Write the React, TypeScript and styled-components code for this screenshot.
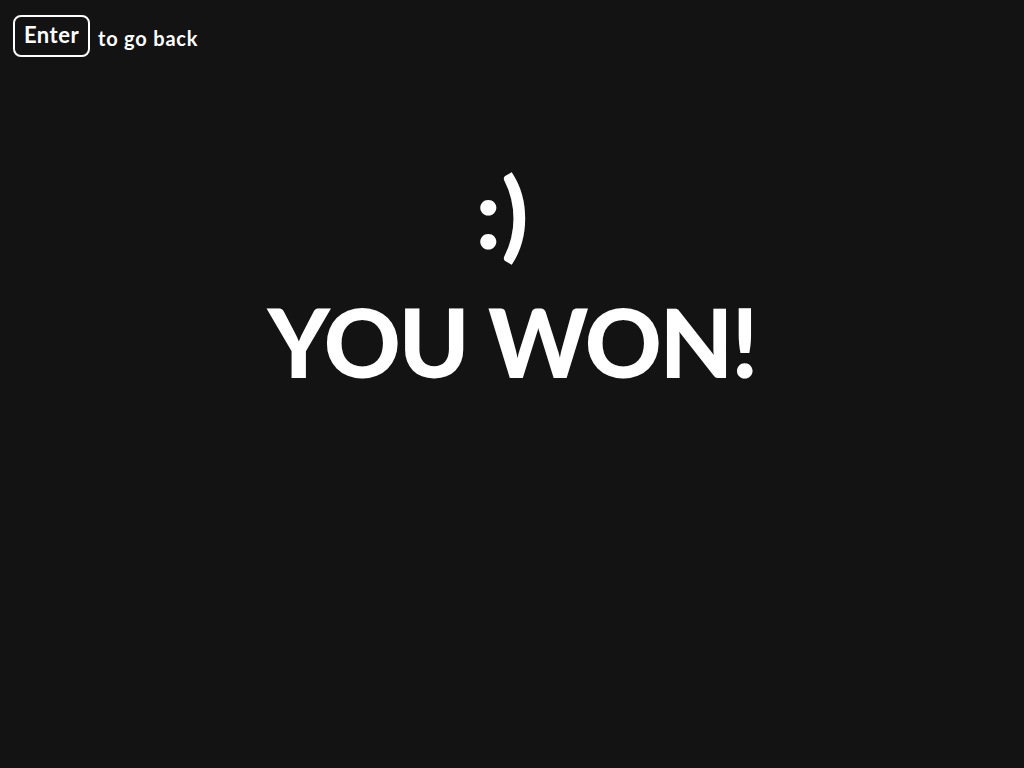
import React from "react";
import styled, { createGlobalStyle } from "styled-components";

const Global = createGlobalStyle`
  html, body { margin: 0; padding: 0; background: #131313; }
  body { font-family: Lato, "Liberation Sans", sans-serif; color: #fff; }
`;

const Page = styled.div`
  width: 1024px;
  height: 768px;
  background: #131313;
  display: flex;
  flex-direction: column;
`;

const Hint = styled.div`
  display: flex;
  align-items: center;
  gap: 8px;
  padding: 15px 0 0 13px;
`;

const Key = styled.span`
  display: inline-flex;
  align-items: center;
  justify-content: center;
  box-sizing: border-box;
  width: 77px;
  height: 42px;
  border: 2px solid #fff;
  border-radius: 8px;
  font-size: 22px;
  font-weight: 700;
  letter-spacing: 0.5px;
  padding-bottom: 3px;
`;

const HintText = styled.span`
  font-size: 20px;
  font-weight: 700;
  letter-spacing: 0.8px;
  padding-top: 3px;
`;

const Center = styled.div`
  display: flex;
  flex-direction: column;
  align-items: center;
  margin-top: 105px;
`;

const Smiley = styled.div`
  font-size: 98px;
  font-weight: 900;
  line-height: 1;
  margin-right: 20px;
`;

const Title = styled.h1`
  margin: 34px 0 0;
  font-size: 95px;
  font-weight: 900;
  line-height: 1;
  letter-spacing: -2px;
`;

export default function App() {
  return (
    <Page>
      <Global />
      <Hint>
        <Key>Enter</Key>
        <HintText>to go back</HintText>
      </Hint>
      <Center>
        <Smiley>:)</Smiley>
        <Title>YOU WON!</Title>
      </Center>
    </Page>
  );
}
